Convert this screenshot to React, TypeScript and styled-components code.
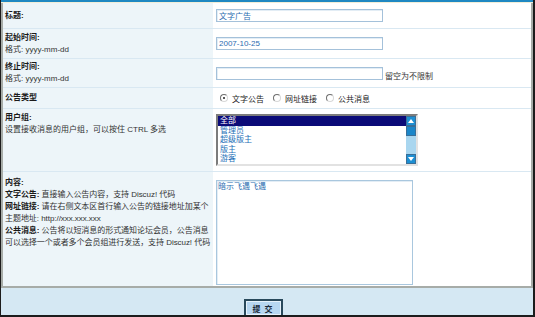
import React from 'react';
import styled, { createGlobalStyle } from 'styled-components';

const GlobalStyle = createGlobalStyle`
  html, body {
    margin: 0;
    padding: 0;
    background: #ffffff;
  }
  body {
    font-family: 'Liberation Sans', 'Noto Sans CJK SC', sans-serif;
    font-size: 8px;
    color: #222;
  }
`;

const Frame = styled.div`
  width: 535px;
  height: 317px;
  box-sizing: border-box;
  border-left: 1px solid #1c1c1c;
  border-right: 2px solid #1c1c1c;
  border-bottom: 2px solid #1c1c1c;
  background: #d5e8f3;
  display: flex;
  flex-direction: column;
  overflow: hidden;
`;

const TopLine = styled.div`
  height: 2px;
  background: #1f88c2;
  border-bottom: 1px solid #f1eed8;
  flex-shrink: 0;
`;

const Table = styled.div`
  border: 2px solid #a7aca8;
  border-top: none;
  background: #ffffff;
  flex-shrink: 0;
`;

interface RowProps {
  $h: number;
  $last?: boolean;
}

const Row = styled.div<RowProps>`
  display: grid;
  grid-template-columns: 210px 1fr;
  height: ${(p) => p.$h}px;
  box-sizing: border-box;
  border-bottom: ${(p) => (p.$last ? 'none' : '1px solid #d9e8f2')};
`;

interface CellProps {
  $top?: number;
}

const LabelCell = styled.div<CellProps>`
  background: #edf5f9;
  display: flex;
  flex-direction: column;
  justify-content: ${(p) => (p.$top !== undefined ? 'flex-start' : 'center')};
  padding: ${(p) => (p.$top !== undefined ? `${p.$top}px` : '0')} 0 0 2px;
  line-height: 12px;
`;

const ValueCell = styled.div<CellProps>`
  display: flex;
  align-items: ${(p) => (p.$top !== undefined ? 'flex-start' : 'center')};
  padding: ${(p) => (p.$top !== undefined ? `${p.$top}px` : '0')} 0 0 3px;
`;

const Title = styled.b`
  font-weight: bold;
  color: #1a1a1a;
`;

const Hint = styled.span`
  color: #333;
`;

const Para = styled.div`
  color: #333;
  letter-spacing: -0.05px;
`;

const TextInput = styled.input`
  width: 167px;
  height: 13px;
  box-sizing: border-box;
  border: 1px solid #a4c1da;
  box-shadow: inset 1px 1px 0 #e3edf5;
  padding: 0 2px;
  font-family: inherit;
  font-size: 8px;
  color: #2b6cb0;
  outline: none;
`;

const After = styled.span`
  margin-left: 2px;
  margin-top: 4px;
  color: #333;
`;

const RadioGroup = styled.div`
  display: flex;
  align-items: center;
  padding-left: 4px;
`;

const RadioLabel = styled.label`
  display: flex;
  align-items: center;
  margin-right: 9px;
  color: #222;
`;

const Radio = styled.input`
  appearance: none;
  width: 8px;
  height: 8px;
  margin: 0 4px 0 0;
  border-radius: 50%;
  border: 1px solid;
  border-color: #6e6e6e #d8d8d8 #d8d8d8 #6e6e6e;
  background: #ffffff;
  position: relative;
  &:checked::after {
    content: '';
    position: absolute;
    left: 2px;
    top: 2px;
    width: 2px;
    height: 2px;
    border-radius: 50%;
    background: #222;
  }
`;

const ListBox = styled.div`
  width: 202px;
  height: 52px;
  box-sizing: border-box;
  border: 2px solid;
  border-color: #7c7c7c #e2e2e2 #e2e2e2 #7c7c7c;
  display: flex;
  background: #ffffff;
  overflow: hidden;
`;

const Options = styled.div`
  flex: 1;
  overflow: hidden;
`;

interface OptionProps {
  $selected?: boolean;
}

const Option = styled.div<OptionProps>`
  height: 9.6px;
  line-height: 10px;
  padding-left: 2px;
  background: ${(p) => (p.$selected ? '#0b0b78' : 'transparent')};
  color: ${(p) => (p.$selected ? '#ffffff' : '#1d6fb8')};
  white-space: nowrap;
`;

const ScrollBar = styled.div`
  width: 10px;
  display: flex;
  flex-direction: column;
  background: #a9d6ef;
`;

const ScrollButton = styled.div`
  height: 10px;
  background: #1d8fd3;
  border: 1px solid #3a6f98;
  box-sizing: border-box;
  display: flex;
  align-items: center;
  justify-content: center;
`;

const Thumb = styled.div`
  height: 10px;
  background: #1b86c9;
  border: 1px solid #3a6f98;
  box-sizing: border-box;
`;

const Track = styled.div`
  flex: 1;
`;

const TextArea = styled.textarea`
  width: 197px;
  height: 105px;
  box-sizing: border-box;
  border: 1px solid #a9c7de;
  box-shadow: inset 1px 1px 0 #e3edf5;
  padding: 0 1px;
  margin: 0;
  resize: none;
  font-family: inherit;
  font-size: 8px;
  line-height: 11px;
  color: #2b6cb0;
  outline: none;
`;

const Footer = styled.div`
  flex: 1;
  display: flex;
  justify-content: center;
  padding-top: 11px;
  padding-right: 8px;
`;

const SubmitButton = styled.button`
  width: 39px;
  height: 18px;
  box-sizing: border-box;
  border: 2px solid #29495b;
  box-shadow: inset 0 0 0 1px #e6f2fb;
  background: #b7d7f1;
  font-family: inherit;
  font-size: 8px;
  font-weight: bold;
  color: #1a2a3a;
  letter-spacing: 1px;
  padding: 0;
`;

function Arrow({ up }: { up?: boolean }) {
  return (
    <svg width="6" height="4" viewBox="0 0 6 4">
      <path d={up ? 'M0 4 L3 0 L6 4 Z' : 'M0 0 L3 4 L6 0 Z'} fill="#ffffff" />
    </svg>
  );
}

const groups = ['全部', '管理员', '超级版主', '版主', '游客'];

export default function App() {
  return (
    <>
      <GlobalStyle />
      <Frame>
        <TopLine />
        <Table>
          <Row $h={26}>
            <LabelCell>
              <Title>标题:</Title>
            </LabelCell>
            <ValueCell>
              <TextInput defaultValue="文字广告" />
            </ValueCell>
          </Row>
          <Row $h={30}>
            <LabelCell>
              <Title>起始时间:</Title>
              <Hint>格式: yyyy-mm-dd</Hint>
            </LabelCell>
            <ValueCell>
              <TextInput defaultValue="2007-10-25" />
            </ValueCell>
          </Row>
          <Row $h={29}>
            <LabelCell>
              <Title>终止时间:</Title>
              <Hint>格式: yyyy-mm-dd</Hint>
            </LabelCell>
            <ValueCell>
              <TextInput defaultValue="" />
              <After>留空为不限制</After>
            </ValueCell>
          </Row>
          <Row $h={21}>
            <LabelCell>
              <Title>公告类型</Title>
            </LabelCell>
            <ValueCell>
              <RadioGroup>
                <RadioLabel>
                  <Radio type="radio" name="type" defaultChecked />
                  文字公告
                </RadioLabel>
                <RadioLabel>
                  <Radio type="radio" name="type" />
                  网址链接
                </RadioLabel>
                <RadioLabel>
                  <Radio type="radio" name="type" />
                  公共消息
                </RadioLabel>
              </RadioGroup>
            </ValueCell>
          </Row>
          <Row $h={63}>
            <LabelCell $top={3}>
              <Title>用户组:</Title>
              <Hint>设置接收消息的用户组，可以按住 CTRL 多选</Hint>
            </LabelCell>
            <ValueCell>
              <ListBox role="listbox">
                <Options>
                  {groups.map((g, i) => (
                    <Option key={g} $selected={i === 0}>
                      {g}
                    </Option>
                  ))}
                </Options>
                <ScrollBar>
                  <ScrollButton>
                    <Arrow up />
                  </ScrollButton>
                  <Thumb />
                  <Track />
                  <ScrollButton>
                    <Arrow />
                  </ScrollButton>
                </ScrollBar>
              </ListBox>
            </ValueCell>
          </Row>
          <Row $h={114} $last>
            <LabelCell $top={5}>
              <Title>内容:</Title>
              <Para>
                <Title>文字公告:</Title> 直接输入公告内容，支持 Discuz! 代码
              </Para>
              <Para>
                <Title>网址链接:</Title> 请在右侧文本区首行输入公告的链接地址加某个主题地址: http://xxx.xxx.xxx
              </Para>
              <Para>
                <Title>公共消息:</Title> 公告将以短消息的形式通知论坛会员，公告消息可以选择一个或者多个会员组进行发送，支持 Discuz! 代码
              </Para>
            </LabelCell>
            <ValueCell $top={8}>
              <TextArea defaultValue="暗示飞遇飞遇" />
            </ValueCell>
          </Row>
        </Table>
        <Footer>
          <SubmitButton type="button">提 交</SubmitButton>
        </Footer>
      </Frame>
    </>
  );
}
